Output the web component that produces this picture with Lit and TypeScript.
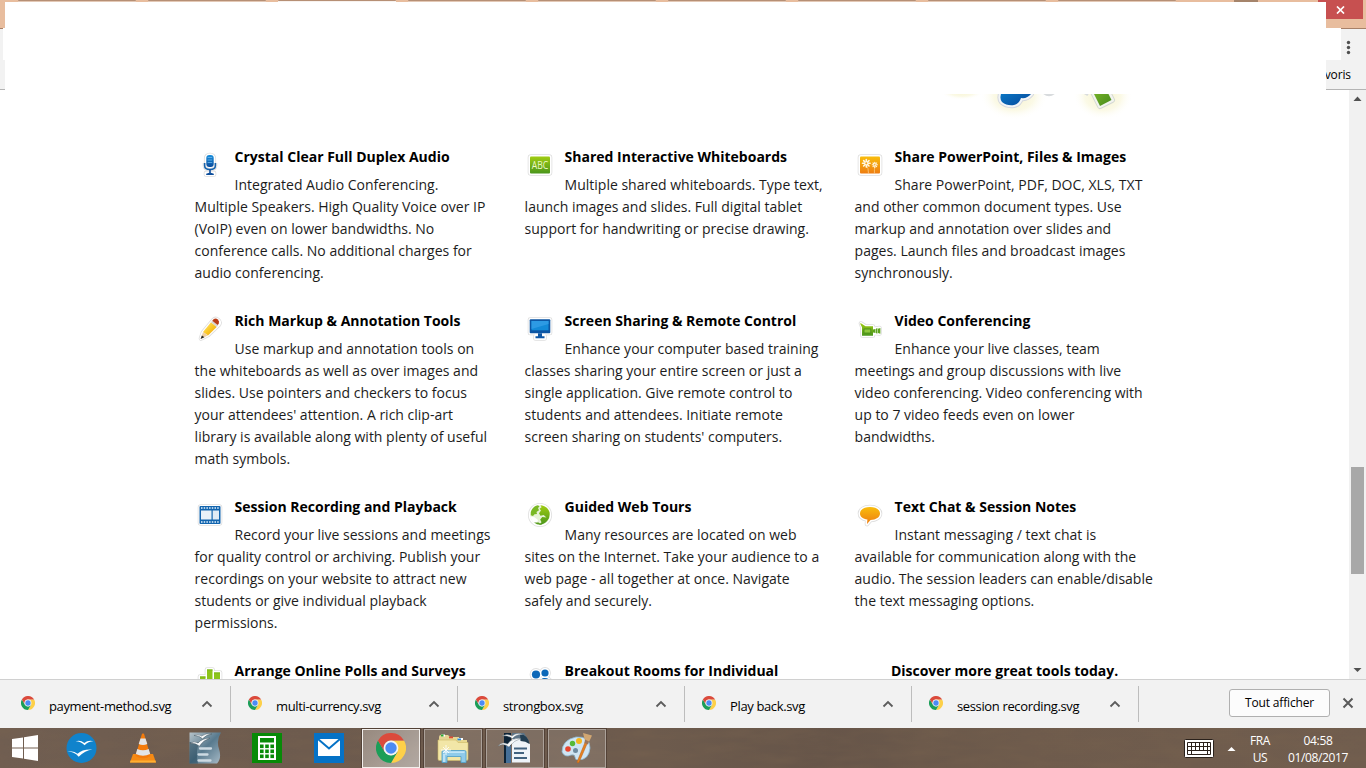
import { LitElement, html, css, svg, TemplateResult } from "lit";
import { customElement, property } from "lit/decorators.js";

type Icon = TemplateResult;

interface Feature {
  icon: Icon | null;
  title: string;
  lines: string[];
}

/* White sticker outline shared by all feature icons. */
const sticker = (shape: unknown) => svg`
  <g stroke="#d4d4d4" stroke-width="4.6" stroke-linejoin="round" fill="#d4d4d4" opacity=".75">${shape}</g>
  <g stroke="#fff" stroke-width="3" stroke-linejoin="round" fill="#fff">${shape}</g>`;

const gradients = svg`<defs>
  <linearGradient id="b" x1="0" y1="0" x2="0" y2="1"><stop offset="0" stop-color="#1a8fdc"/><stop offset="1" stop-color="#0a4c9c"/></linearGradient>
  <linearGradient id="g" x1="0" y1="0" x2="0" y2="1"><stop offset="0" stop-color="#a0cc12"/><stop offset="1" stop-color="#4a961c"/></linearGradient>
  <linearGradient id="o" x1="0" y1="0" x2="0" y2="1"><stop offset="0" stop-color="#f9bd0c"/><stop offset="1" stop-color="#ee7d12"/></linearGradient>
  <linearGradient id="y" x1="0" y1="0" x2="1" y2="1"><stop offset="0" stop-color="#ffe98a"/><stop offset=".5" stop-color="#fbc926"/><stop offset="1" stop-color="#e79a12"/></linearGradient>
</defs>`;

const featureIcon = (body: unknown): Icon => html`<svg class="ico" viewBox="0 0 30 30" width="30" height="30">${gradients}${body}</svg>`;

const micShape = svg`<rect x="11.2" y="5" width="7.6" height="12" rx="3.2"/><path d="M11 23h8v1.5h-8z"/>`;
const mic = featureIcon(svg`${sticker(micShape)}
  <path d="M9.4 13v2.5c0 2.6 2.2 4.2 5.6 4.2s5.6-1.6 5.6-4.2V13" fill="none" stroke="#e4e4e4" stroke-width="3.6"/>
  <rect x="11.3" y="5" width="7.4" height="12" rx="3" fill="url(#b)"/>
  <path d="M12.6 7.5h4.6M12.6 10h4.6M12.6 12.5h4.6" stroke="#6cb8ee" stroke-width=".8"/>
  <path d="M9.6 13v2.5c0 2.4 2 4 5.4 4s5.4-1.6 5.4-4V13" fill="none" stroke="#1563ae" stroke-width="1.5"/>
  <path d="M14.2 19.5h1.6v3.2l3 1v1.2h-7.6v-1.2l3-1z" fill="#0e4f9c"/>`);

const boardShape = svg`<rect x="5" y="6.500" width="20" height="17" rx="1"/>`;
const board = featureIcon(svg`${sticker(boardShape)}<rect x="5" y="6.500" width="20" height="17" rx="1" fill="url(#g)"/>
  <text x="15" y="18.900" font-family="Open Sans, sans-serif" font-weight="400" font-size="10.500" textLength="16.500" lengthAdjust="spacingAndGlyphs" text-anchor="middle" fill="#eef8c8">ABC</text>`);

const petals = (cx: number, cy: number, r: number) => [0, 45, 90, 135].map(
  (a) => svg`<path d="M${cx - r} ${cy}H${cx + r}" transform="rotate(${a} ${cx} ${cy})" stroke="#fff8e4" stroke-width="${r * 0.42}" stroke-linecap="round"/>`);
const flowers = featureIcon(svg`${sticker(boardShape)}<rect x="5" y="6.500" width="20" height="17" rx="1" fill="url(#o)"/>
  <path d="M11.500 15q2 3 2 8.500M20 16q-.8 3-.6 7.500" fill="none" stroke="#fbd596" stroke-width=".7"/>
  ${petals(11.3, 13.3, 3.8)}${petals(19.8, 14.8, 2.6)}
  <circle cx="11.300" cy="13.300" r="1" fill="#f3a016"/><circle cx="19.800" cy="14.800" r=".7" fill="#f3a016"/>`);

const pencilShape = svg`<path d="M6 24.500l2-6L18.500 6q2-2 4.500 0t1 4.500L13 21z"/>`;
const pencil = featureIcon(svg`${sticker(pencilShape)}
  <path d="M8 18l8-9.700 5.700 4.700L13 21.500z" fill="url(#y)"/>
  <path d="M16 8.300l1.500-1.800 5.700 4.700-1.500 1.800z" fill="#d8d5d0"/>
  <path d="M17.300 6.700l1.500-1.600q2-1.400 4 .4t.9 4.200l-1 1.400z" fill="#b93c16"/>
  <path d="M8 18l5 3.500-7.200 3.300z" fill="#efcfa0"/><path d="M6.900 21.500l2.500 1.700-3.800 1.900z" fill="#222"/>`);

const monitorShape = svg`<path d="M5 5.500h20v13.500h-7.500v3h2v2.500h-9V22h2v-3H5z"/>`;
const monitor = featureIcon(svg`${sticker(monitorShape)}
  <rect x="4.700" y="5.200" width="20.600" height="14" rx="1" fill="#0d56a4"/>
  <rect x="6.500" y="7" width="17" height="9.300" fill="#138ad8"/><path d="M6.500 7h17v3L6.500 15z" fill="#2d9ae4"/>
  <path d="M13 19.200h4v3h2.500v2h-9v-2H13z" fill="#0d56a4"/>`);

const cameraShape = svg`<path d="M6 9.500l4.500 3H18v2.500l6.500-1v5.500L18 18.500v3H7.500v-8z"/>`;
const camera = featureIcon(svg`${sticker(cameraShape)}
  <path d="M5.500 9l5 3.200H18v9.500H7v-8.500L5.300 10z" fill="url(#g)"/>
  <path d="M18 15.600l2.500-.5v4l-2.500-.5zM21 14.600l1.500-.3v5.200l-1.500-.3zM23 14.800l2.400-.8v5.800l-2.400-.8z" fill="#5da41c"/>
  <rect x="9" y="15" width="6.800" height="4" fill="#8fc83c" stroke="#45891b" stroke-width=".8"/>`);

const film = featureIcon(svg`${sticker(boardShape)}<rect x="4.500" y="6" width="21" height="18" rx="1" fill="#1264ae"/>
  <path d="M6 8h18.500M6 22h18.500" stroke="#e5f4ff" stroke-width="1.500" stroke-dasharray="1.500 1.200"/>
  <rect x="6" y="10.500" width="10.500" height="9" fill="#e8f1f8"/><rect x="17.700" y="10.500" width="6.300" height="9" fill="#e0ebf5"/>`);

const globeShape = svg`<circle cx="15" cy="15" r="9.800"/>`;
const globe = featureIcon(svg`${sticker(globeShape)}<circle cx="15" cy="15" r="9.800" fill="#e6f2d6"/>
  <path d="M5.800 12q2-6 7.200-6.800l1.500 1.200-1.500 1.700 1 2.200-2.500 1.800.5 1.800-2.500.4-1.500 1.700-2.200-.8z" fill="#79b824"/>
  <path d="M15.500 5.200q6.500.5 9 6.800.8 5-2 8.500-3 4-8.500 4.300l2.500-2.600-1.300-2.700 2.100-2.500 4.200.5-2.800-2.500-3.200.7-1.500-2.500 2-2.800-1.400-1.600 2-1.500z" fill="url(#g)"/>
  <path d="M5.500 16.500l4 .8 3.500 2.700-1.500 4.300q-5-1.800-6-7.800z" fill="#fff"/>
  <path d="M9 22.500q3 2.600 8 2.200l-3.500-2.200z" fill="#579d1e"/>`);

const bubbleShape = svg`<path d="M15 7c6 0 10 2.800 10 6.500S21 19.800 15.500 20L12 24l.4-4.500C8 18.800 5 16.800 5 13.500 5 9.800 9 7 15 7z"/>`;
const bubble = featureIcon(svg`${sticker(bubbleShape)}<g fill="url(#o)">${bubbleShape}</g>`);

const barsShape = svg`<path d="M5 12.500h5.500v12H5zM12 5.500h5.500v19H12zM19 8.500h6v16h-6z"/>`;
const bars = featureIcon(svg`${sticker(barsShape)}<g fill="#8cc41a">${barsShape}</g>
  <path d="M5 13h5.500M12 6h5.500M19 9h6" stroke="#7ab51a" stroke-width="1"/>`);

const peopleShape = svg`<circle cx="11" cy="10.500" r="4.100"/><circle cx="20" cy="9" r="3.600"/><path d="M5 24c0-6 2-8 6-8s6 3 6 8zM16 21c-1-5 0-7 4-7s6 3 6 7z"/>`;
const people = featureIcon(svg`${sticker(peopleShape)}<g fill="#0d68b8">${peopleShape}</g>`);

const FEATURES: Feature[] = [
  { icon: mic, title: "Crystal Clear Full Duplex Audio", lines: ["Integrated Audio Conferencing.", "Multiple Speakers. High Quality Voice over IP", "(VoIP) even on lower bandwidths. No", "conference calls. No additional charges for", "audio conferencing."] },
  { icon: board, title: "Shared Interactive Whiteboards", lines: ["Multiple shared whiteboards. Type text,", "launch images and slides. Full digital tablet", "support for handwriting or precise drawing."] },
  { icon: flowers, title: "Share PowerPoint, Files & Images", lines: ["Share PowerPoint, PDF, DOC, XLS, TXT", "and other common document types. Use", "markup and annotation over slides and", "pages. Launch files and broadcast images", "synchronously."] },
  { icon: pencil, title: "Rich Markup & Annotation Tools", lines: ["Use markup and annotation tools on", "the whiteboards as well as over images and", "slides. Use pointers and checkers to focus", "your attendees' attention. A rich clip-art", "library is available along with plenty of useful", "math symbols."] },
  { icon: monitor, title: "Screen Sharing & Remote Control", lines: ["Enhance your computer based training", "classes sharing your entire screen or just a", "single application. Give remote control to", "students and attendees. Initiate remote", "screen sharing on students' computers."] },
  { icon: camera, title: "Video Conferencing", lines: ["Enhance your live classes, team", "meetings and group discussions with live", "video conferencing. Video conferencing with", "up to 7 video feeds even on lower", "bandwidths."] },
  { icon: film, title: "Session Recording and Playback", lines: ["Record your live sessions and meetings", "for quality control or archiving. Publish your", "recordings on your website to attract new", "students or give individual playback", "permissions."] },
  { icon: globe, title: "Guided Web Tours", lines: ["Many resources are located on web", "sites on the Internet. Take your audience to a", "web page - all together at once. Navigate", "safely and securely."] },
  { icon: bubble, title: "Text Chat & Session Notes", lines: ["Instant messaging / text chat is", "available for communication along with the", "audio. The session leaders can enable/disable", "the text messaging options."] },
  { icon: bars, title: "Arrange Online Polls and Surveys", lines: [] },
  { icon: people, title: "Breakout Rooms for Individual", lines: [] },
  { icon: null, title: "Discover more great tools today.", lines: [] },
];

const DOWNLOADS = ["payment-method.svg", "multi-currency.svg", "strongbox.svg", "Play back.svg", "session recording.svg"];

const chrome = (size: number) => html`<svg viewBox="0 0 30 30" width=${size} height=${size}>
  <path d="M15 7.500h13A15 15 0 0 1 15 30l6.500-11.200z" fill="#fdd049"/>
  <path d="M2 7.500A15 15 0 0 0 15 30l6.500-11.200L15 22.500 8.500 18.700z" fill="#1b9e58"/>
  <path d="M2 7.500A15 15 0 0 1 28 7.500H15a7.500 7.500 0 0 0-6.500 11.200z" fill="#db4a3c"/>
  <circle cx="15" cy="15" r="7.400" fill="#f4f4f4"/><circle cx="15" cy="15" r="5.700" fill="#4b8bf4"/></svg>`;

const windows = html`<svg viewBox="0 0 26 26" width="26" height="26" fill="#fff"><path d="M0 4l11-1.600v10.200H0zM12 2.200L26 0v12.600H12zM0 13.600h11v10L0 22zM12 13.600h14V26l-14-2.200z"/></svg>`;

const openOffice = html`<svg viewBox="0 0 31 30" width="31" height="30"><circle cx="15.500" cy="15" r="15" fill="#1083cc"/>
  <path fill="#fff" d="M9.500 8.300q5-1.500 8.800 1.700 3.600-3 9.200-1.800-5.200.2-8.900 4Q14.500 8.200 9.500 8.300zM1 18.600q7-1.200 10.500 2.200 5-5 15-4.300-7.500 1-13.800 7.200Q8 18.500 1 18.600z"/></svg>`;

const vlc = html`<svg viewBox="0 0 28 30" width="28" height="30">
  <path d="M4 21h20l3 8.500H1z" fill="#f58a14"/><path d="M1.500 27.500h25l.5 2H1z" fill="#ffb033"/>
  <path d="M13 .8q1-.8 2 0L21.500 23q-7 4.500-15 0z" fill="#f37b0c"/>
  <path d="M11.500 5.500h5l1.800 5.600q-4.300 2-8.600 0zM8.300 16q5.700 2.500 11.400 0l1.500 5q-7.200 3.500-14.400 0z" fill="#e2e4e6"/></svg>`;

const writerOld = html`<svg viewBox="0 0 32 32" width="32" height="32">
  <defs><linearGradient id="w" x1="0" y1="0" x2="1" y2="1"><stop offset="0" stop-color="#b6c3ca"/><stop offset=".5" stop-color="#587a8e"/><stop offset="1" stop-color="#a8bac6"/></linearGradient></defs>
  <path d="M.5 .5H32Q27 8 30 17t-2 14.500H.5z" fill="url(#w)"/><path d="M.5 10H10.500Q6 20 9 31.500H.5z" fill="#27495c" opacity=".55"/>
  <g stroke="#cddae2" stroke-width="2.300" stroke-linecap="round"><path d="M11 16.500h11M9.500 22.500h9M9.500 28.500h12"/></g>
  <path fill="#f8fafb" stroke="#4a5a64" stroke-width=".5" d="M5 3.500q4-2 7.500.5Q17 .8 23 2q-6 .8-9.500 4.800Q10 3.300 5 3.500zM1 11.500q4-3 8-.6 4.500-4.900 12-4.700-7 2-10.500 8Q6 10.500 1 11.500z"/></svg>`;

const calculator = html`<svg viewBox="0 0 30 30" width="30" height="30"><path fill="#078a07" d="M0 0h30v30H0z"/><path d="M6 3h18v24H6z" fill="#fff"/><path d="M8 5h14v4.500H8z" fill="#078a07"/>
  ${[11.5, 16.5, 21.5].map((y) => [8, 13.2, 18.400].map((x) => svg`<rect x=${x} y=${y} width="3.600" height="3.600" fill="#078a07"/>`))}</svg>`;

const mail = html`<svg viewBox="0 0 30 30" width="30" height="30"><path fill="#0572c6" d="M0 0h30v30H0z"/><path d="M4 6h22v17H4z" fill="#fff"/><path d="M4 6l11 9.500L26 6" fill="none" stroke="#0572c6" stroke-width="2"/></svg>`;

const explorer = html`<svg viewBox="0 0 32 32" width="32" height="32">
  <path d="M2 5q0-2 2-2h7l2 2h9v4H2z" fill="#e5d494"/><path d="M11 6h10l2 2h7v20H11z" fill="#e7d78f"/>
  <path d="M4 2.500h4v2H4zM21 6h5v2h-5z" fill="#fff"/><path d="M4 2.500h2.500v2H4z" fill="#2caa32"/><path d="M12 4.500h4v1.800h-4z" fill="#e04c32"/><path d="M20.500 6.500h3.500v1.800h-3.500z" fill="#2a8bd8"/>
  <path d="M1 8h18l2 2.500h10V27q0 1.500-1.500 1.500h-27Q1 28.500 1 27z" fill="#f2e6a7" stroke="#cdb964" stroke-width=".6"/>
  <path d="M5 30.500V20q0-1.500 1.500-1.500h21q1.500 0 1.500 1.500v10.500h-5v-6H10v6z" fill="#8fcbea" stroke="#55a3ca" stroke-width=".9"/>
  <path d="M6.500 20.200h21M7 22v8" stroke="#d4effb" stroke-width="1.300"/><path d="M9 13v10M4 18h10M6 15l6 6M12 15l-6 6" stroke="#fff" stroke-width=".8"/></svg>`;

const writer = html`<svg viewBox="0 0 34 32" width="34" height="32">
  <path d="M6 1h7v30H6z" fill="#0d2336"/><path d="M8 14h5v17H8z" fill="#456f98"/><path d="M14 1h12l5 8H14z" fill="#5d7487"/>
  <path d="M14 7h11l7 5v18.500H14z" fill="#eef3f8"/><path d="M22 2q8 1 9.500 10-4-3-9-3z" fill="#223e52"/>
  <g stroke="#41627f" stroke-width="1.800"><path d="M16 16.500h13M16 21h10M16 26h13"/></g>
  <path fill="#f8fafb" stroke="#63717b" stroke-width=".4" d="M4 4q5-3 10 0 5-4 11-1.500-7-.5-10.500 4Q9 3 4 4zM0 14q4-5 9.500-2 5-6.500 13.500-5.500-7 1.500-12 8.500Q5.500 10.500 0 14z"/></svg>`;

const paint = html`<svg viewBox="0 0 32 32" width="32" height="32">
  <path d="M1 20Q1 8 15 5q14-1 14 11-1 12-12 12-3 0-3-3 0-3-4-2-6 3-9-3z" fill="#cfe5f3" stroke="#8cb7d2" stroke-width=".8"/>
  <circle cx="7" cy="17" r="2.800" fill="#e8442e"/><circle cx="11.500" cy="11.500" r="2.700" fill="#57b937"/><circle cx="18" cy="9" r="3" fill="#f6b71e"/><circle cx="14.500" cy="18.500" r="2.500" fill="#6d8ba0"/>
  <path d="M25 8l2 1.500L18 30.500q-1.500 1-2-.5z" fill="#e58121" stroke="#b65e14" stroke-width=".5"/><path d="M22 1l9 2.500-3 6.500-4-1z" fill="#d2a772"/><path d="M24 7.500l4 2-1 3-3.500-1.500z" fill="#9b755a"/></svg>`;

@customElement("feature-card")
export class FeatureCard extends LitElement {
  @property({ attribute: false }) feature!: Feature;

  static styles = css`
    :host { display: block; width: 300px; white-space: nowrap; }
    .slot { float: left; width: 30px; height: 40px; margin: 4px 10px 0 0; }
    .ico { display: block; margin-left: .4px; }
    .title { margin: 0 0 6px; font-size: 14px; line-height: 22px; font-weight: 700; color: #000; }
    .centered { text-align: center; }
    .text { margin: 0; font-size: 14px; line-height: 22px; color: #1c1c1c; }
  `;

  render() {
    const { icon, title, lines } = this.feature;
    return html`${icon ? html`<div class="slot">${icon}</div>` : ""}
      <h3 class="title ${icon ? "" : "centered"}">${title}</h3>
      <p class="text">${lines.map((l) => html`${l}<br />`)}</p>`;
  }
}

@customElement("app-root")
export class AppRoot extends LitElement {
  static styles = css`
    :host { display: flex; flex-direction: column; width: 1366px; height: 768px; overflow: hidden; position: relative; background: #fff; font-family: "Open Sans", "Noto Sans", sans-serif; color: #000; }
    .titlebar { display: flex; flex: none; height: 29px; background: #e8bd9e; border-bottom: 1px solid #a78068; box-sizing: border-box; }
    .tabs { display: flex; flex: 1; gap: 12px; padding-left: 18px; }
    .tab { flex: none; width: 118px; height: 3px; background: #e3c8b5; border-top: 1px solid #b68f75; box-sizing: border-box; border-radius: 1px; }
    .tab.active { background: #f8f2ee; }
    .min { width: 24px; height: 5px; background: #a5846b; margin-right: 60px; }
    .close { width: 45px; height: 19px; background: #c75050; margin-right: 3px; display: flex; align-items: center; justify-content: center; }
    .toolbar { flex: none; height: 31px; background: #f2f2f2; display: flex; justify-content: flex-end; align-items: center; padding: 5px 15px 0 0; box-sizing: border-box; }
    .bookmarks { flex: none; height: 30px; background: #f2f2f2; border-bottom: 1px solid #b4b4b4; box-sizing: border-box; text-align: right; padding-right: 15px; font-size: 12px; line-height: 29px; letter-spacing: -.1px; }
    .mask { position: absolute; background: #fff; }
    .mask-page { left: 5px; top: 2px; width: 1321px; height: 92px; }
    .mask-url { left: 3px; top: 28px; width: 1338px; height: 32px; }
    .view { flex: none; height: 589px; display: flex; overflow: hidden; }
    .page { flex: 1; overflow: hidden; padding-left: 194.6px; }
    .hero { height: 56px; padding-left: 745.4px; overflow: hidden; }
    .hero svg { display: block; }
    .grid { display: grid; grid-template-columns: repeat(3, 300px); gap: 26px 30px; }
    .scroll { width: 17px; background: #f1f1f1; display: flex; flex-direction: column; align-items: center; }
    .scroll svg { display: block; flex: none; }
    .gap { height: 360px; flex: none; }
    .thumb { width: 13px; height: 107px; background: #a8a8a8; flex: none; }
    .rest { flex: 1; }
    .shelf { flex: none; height: 49px; border-top: 1px solid #d0d0d0; background: #f2f2f2; box-sizing: border-box; display: flex; align-items: center; }
    .item { width: 227px; height: 36px; box-sizing: border-box; border-right: 1px solid #bdbdbd; display: flex; align-items: center; padding: 0 17px 0 17px; }
    .item.first { width: 231px; padding-left: 21px; }
    .item svg { flex: none; display: block; }
    .badge { width: 14px; height: 16px; flex: none; margin-bottom: 1px; }
    .name { flex: 1; margin: 3px 0 0 14px; font-size: 13px; line-height: 18px; letter-spacing: -.36px; white-space: nowrap; }
    .all { margin: 0 12px 2px auto; width: 101px; height: 28px; box-sizing: border-box; border: 1px solid #b0b0b0; border-radius: 3px; background: #fcfcfc; font-size: 12px; line-height: 26px; text-align: center; letter-spacing: -.15px; }
    .dismiss { margin: 0 12px 2px 0; }
    .taskbar { flex: none; height: 40px; position: relative; display: flex; align-items: center; background: linear-gradient(90deg, #705e51, #6c5a4d 30%, #6d5b4d 48%, #665549 60%, #6e5b4c 75%, #705d4e); color: #fff; }
    .grain { position: absolute; left: 0; top: 0; opacity: .35; }
    .task { position: relative; width: 62px; height: 40px; flex: none; display: flex; align-items: center; justify-content: center; }
    .start { width: 50px; }
    .box { width: 58px; height: 39px; box-sizing: border-box; display: flex; align-items: center; justify-content: center; border: 1px solid #aba199; background: rgba(255,255,255,.12); box-shadow: 0 0 0 1px rgba(50,36,28,.45); }
    .box.on { border-color: #f2efec; background: linear-gradient(135deg, rgba(255,255,255,.28), rgba(255,255,255,.48)); }
    .tray { position: relative; margin-left: auto; display: flex; align-items: center; font-size: 12px; line-height: 17px; text-align: center; letter-spacing: -.36px; padding: 2px 18px 0 0; }
    .keys { margin-bottom: 1px; }
    .arrow { margin: 0 12px 0 13px; }
    .lang { width: 24px; margin-right: 16px; }
    .clock { width: 60px; }
  `;

  render() {
    return html`
      <div class="titlebar">
        <div class="tabs">${[0, 1, 2, 3, 4, 5, 6, 7, 8].map((i) => html`<div class="tab ${i === 2 ? "active" : ""}"></div>`)}</div>
        <div class="min"></div>
        <div class="close"><svg width="9" height="8" viewBox="0 0 9 8"><path d="M1 .5l7 7M8 .5l-7 7" stroke="#fff" stroke-width="1.700"/></svg></div>
      </div>
      <div class="toolbar"><svg width="5" height="15" viewBox="0 0 5 15" fill="#505050"><circle cx="2.500" cy="2.500" r="1.700"/><circle cx="2.500" cy="7.500" r="1.700"/><circle cx="2.500" cy="12.500" r="1.700"/></svg></div>
      <div class="bookmarks">voris</div>

      <div class="view">
        <div class="page">
          <div class="hero">
            <svg width="240" height="56" viewBox="940 90 240 56">
              <defs>
                <radialGradient id="halo"><stop offset="0" stop-color="#f6f2cc"/><stop offset=".6" stop-color="#faf8e0" stop-opacity=".8"/><stop offset="1" stop-color="#fff" stop-opacity="0"/></radialGradient>
                <linearGradient id="hb" x1="0" y1="0" x2="1" y2="1"><stop offset="0" stop-color="#0a80cc"/><stop offset="1" stop-color="#07479a"/></linearGradient>
                <linearGradient id="hg" x1="0" y1="0" x2="1" y2="1"><stop offset="0" stop-color="#7fba2a"/><stop offset="1" stop-color="#468a1c"/></linearGradient>
              </defs>
              <ellipse cx="1014" cy="96" rx="34" ry="24" fill="url(#halo)"/><ellipse cx="1103" cy="96" rx="30" ry="24" fill="url(#halo)"/><ellipse cx="962" cy="91" rx="22" ry="9" fill="url(#halo)"/>
              <g stroke-linejoin="round">
                <path d="M1004 88q-6 9-2 14 5 4 12 3 5-1 7-7 6 1 10-4v-6z" stroke="#d5d8de" stroke-width="6" fill="#d5d8de"/>
                <path d="M1004 88q-6 9-2 14 5 4 12 3 5-1 7-7 6 1 10-4v-6z" stroke="#f3f5f7" stroke-width="4" fill="#f3f5f7"/>
                <path d="M1004 88q-6 9-2 14 5 4 12 3 5-1 7-7 6 1 10-4v-6z" fill="url(#hb)"/>
                <path d="M1044 93q5 4 10 0M1083 92l5 3" stroke="#d8dbdd" stroke-width="2.500" fill="none"/>
                <path d="M1092 90l8 16 12-6-6-12z" stroke="#d5d8d3" stroke-width="6" fill="#d5d8d3"/>
                <path d="M1092 90l8 16 12-6-6-12z" stroke="#f2f4ef" stroke-width="4" fill="#fff"/>
                <path d="M1092 90l8 16 11.500-6-6-12z" fill="url(#hg)"/>
              </g>
            </svg>
          </div>
          <div class="grid">${FEATURES.map((f) => html`<feature-card .feature=${f}></feature-card>`)}</div>
        </div>
        <div class="scroll">
          <svg width="17" height="17" viewBox="0 0 17 17"><path d="M4.500 11l4-4.500 4 4.500z" fill="#505050"/></svg>
          <div class="gap"></div><div class="thumb"></div><div class="rest"></div>
          <svg width="17" height="17" viewBox="0 0 17 17"><path d="M4.500 6l4 4 4-4z" fill="#505050"/></svg>
        </div>
      </div>

      <div class="shelf">
        ${DOWNLOADS.map((d, i) => html`<div class="item ${i === 0 ? "first" : ""}">
          <span class="badge">${chrome(14)}</span><span class="name">${d}</span>
          <svg width="12" height="8" viewBox="0 0 12 8"><path d="M1.500 6.500L6 2l4.500 4.500" fill="none" stroke="#5c5c5c" stroke-width="1.800"/></svg>
        </div>`)}
        <div class="all">Tout afficher</div>
        <svg class="dismiss" width="12" height="12" viewBox="0 0 12 12"><path d="M1.500 1.500l9 9M10.500 1.500l-9 9" stroke="#5a5a5a" stroke-width="2"/></svg>
      </div>

      <div class="taskbar">
        <svg class="grain" width="1366" height="40"><filter id="n"><feTurbulence type="fractalNoise" baseFrequency=".02 .09" numOctaves="3" seed="4"/><feColorMatrix values="0 0 0 0 .2  0 0 0 0 .13  0 0 0 0 .08  1.800 0 0 0 -.6"/></filter><rect width="1366" height="40" filter="url(#n)"/></svg>
        <div class="task start">${windows}</div>
        ${[openOffice, vlc, writerOld, calculator, mail].map((t) => html`<div class="task">${t}</div>`)}
        <div class="task"><div class="box on">${chrome(30)}</div></div>
        ${[explorer, writer, paint].map((t) => html`<div class="task"><div class="box">${t}</div></div>`)}
        <div class="tray">
          <svg class="keys" width="30" height="19" viewBox="0 0 30 19"><rect x=".5" y=".5" width="29" height="18" rx="1" fill="#fff" stroke="#2a211b"/>
            <path d="M3.500 3.500h23v12h-23zM3.500 7.500h23M3.500 11.500h23M7.500 3.500v12M11.500 3.500v8M15.500 3.500v8M19.500 3.500v8M23.500 3.500v12" fill="none" stroke="#2a211b"/></svg>
          <svg class="arrow" width="9" height="6" viewBox="0 0 9 6"><path d="M.5 5l4-4 4 4z" fill="#fff"/></svg>
          <div class="lang">FRA<br />US</div>
          <div class="clock">04:58<br />01/08/2017</div>
        </div>
      </div>

      <div class="mask mask-page"></div>
      <div class="mask mask-url"></div>
    `;
  }
}
